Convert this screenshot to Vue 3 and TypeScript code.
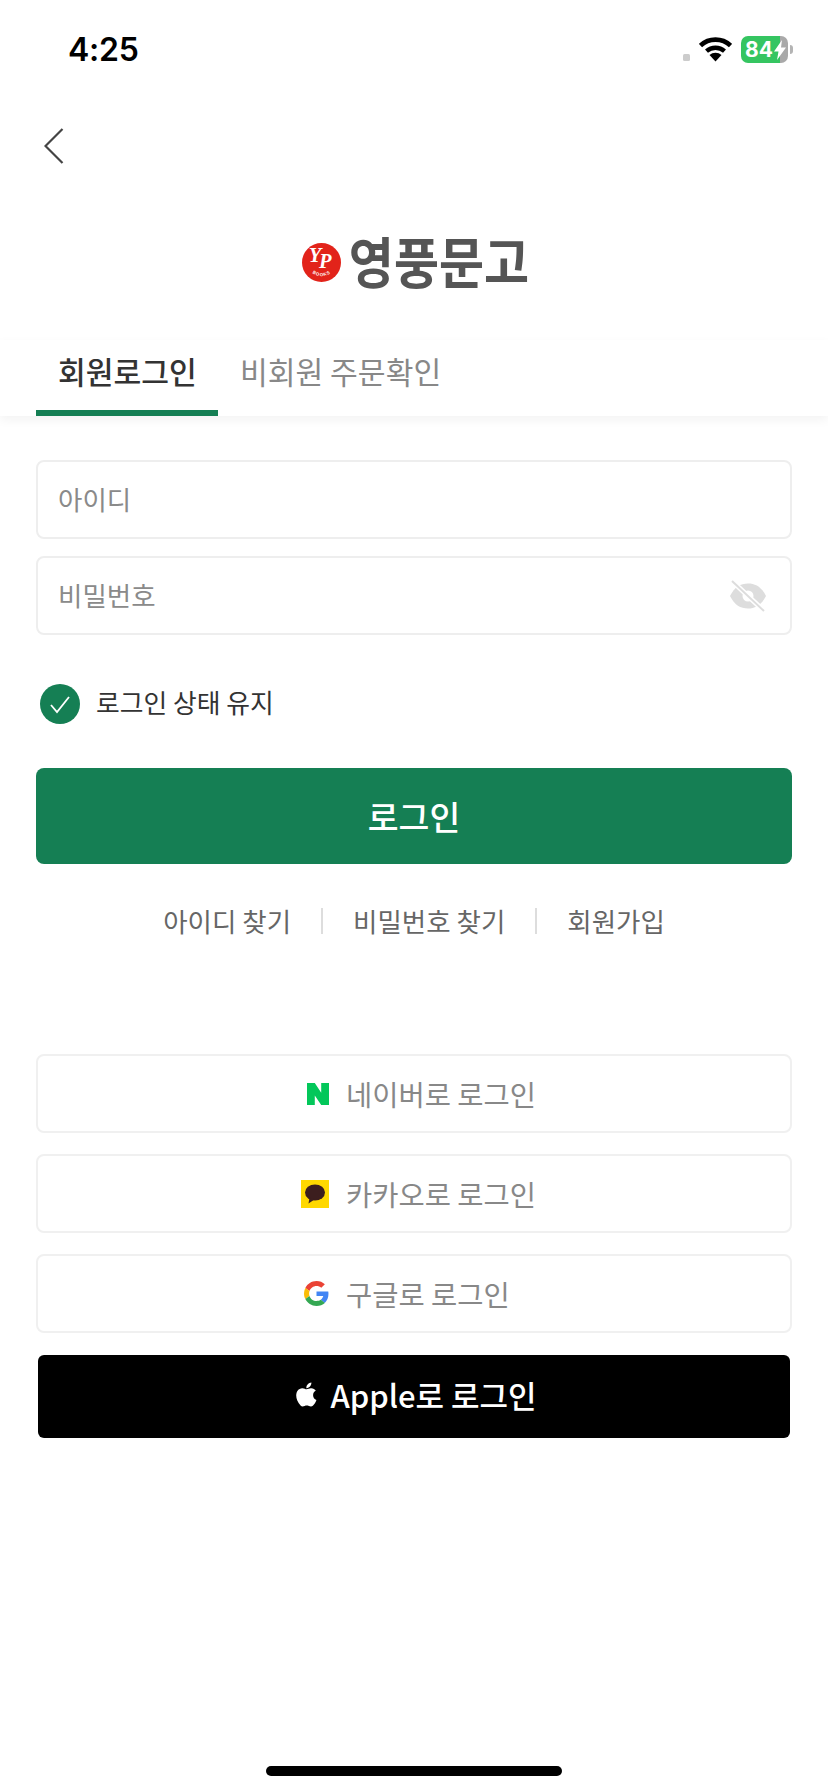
<script setup lang="ts">
const links: string[] = ['아이디 찾기', '비밀번호 찾기', '회원가입']
</script>

<template>
  <div class="app">
    <div class="status">
      <span class="time">4:25</span>
      <div class="status-right">
        <span class="dot"></span>
        <svg class="wifi" viewBox="0 0 33 25">
          <path d="M1.5 8.5a22 22 0 0 1 30 0" fill="none" stroke="#000" stroke-width="4.6" />
          <path d="M7.5 14.2a13.5 13.5 0 0 1 18 0" fill="none" stroke="#000" stroke-width="4.4" />
          <path d="M16.5 24.5l-6-6.4a8.6 8.6 0 0 1 12 0z" fill="#000" />
        </svg>
        <div class="battery">
          <div class="battery-body">
            <span class="battery-num">84</span>
            <svg class="bolt" viewBox="0 0 12 20"><path d="M8 0L0 11.500h4.500L3 20l9-12.500H7z" fill="#fff" /></svg>
          </div>
          <span class="battery-nub"></span>
        </div>
      </div>
    </div>

    <div class="nav">
      <svg class="back" viewBox="0 0 20 36">
        <path d="M18.500 1L1.500 18l17 17" fill="none" stroke="#444" stroke-width="2.200" />
      </svg>
    </div>

    <div class="logo">
      <svg class="logo-mark" viewBox="0 0 40 40">
        <defs><path id="booksArc" d="M7 26.500a15 15 0 0 0 26 0" /></defs>
        <circle cx="20" cy="20" r="20" fill="#e2231a" />
        <text x="7" y="19" class="yp">Y<tspan dy="7" dx="-2.500">P</tspan></text>
        <text class="books"><textPath href="#booksArc" startOffset="50%" text-anchor="middle">BOOKS</textPath></text>
      </svg>
      <span class="logo-text">영풍문고</span>
    </div>

    <div class="tabs">
      <div class="tab active">회원로그인</div>
      <div class="tab">비회원 주문확인</div>
    </div>

    <div class="form">
      <div class="field"><span class="placeholder">아이디</span></div>
      <div class="field second">
        <span class="placeholder">비밀번호</span>
        <svg class="eye" viewBox="0 0 38 32">
          <path d="M1 16C5.500 7 11.500 3.500 19 3.500S32.500 7 37 16c-4.500 9-10.500 12.500-18 12.500S5.500 25 1 16z" fill="#ddd" />
          <circle cx="19" cy="16" r="5.500" fill="#fff" />
          <path d="M3 1l32 30" stroke="#fff" stroke-width="5" />
          <path d="M3 1l32 30" stroke="#ddd" stroke-width="2" />
        </svg>
      </div>

      <div class="remember">
        <span class="check">
          <svg viewBox="0 0 40 40"><path d="M11 21l6 7 12-15" fill="none" stroke="#fff" stroke-width="1.800" /></svg>
        </span>
        <span class="remember-label">로그인 상태 유지</span>
      </div>

      <div class="login-btn">로그인</div>

      <div class="links">
        <template v-for="(link, i) in links" :key="link">
          <span v-if="i > 0" class="sep"></span>
          <span class="link">{{ link }}</span>
        </template>
      </div>

      <div class="social">
        <div class="sns">
          <svg class="ic-naver" viewBox="0 0 24 24"><path d="M0 0h8.500l7 10.500V0H24v24h-8.500l-7-10.500V24H0z" fill="#03c75a" /></svg>
          <span>네이버로 로그인</span>
        </div>
        <div class="sns">
          <svg class="ic-kakao" viewBox="0 0 28 28">
            <rect width="28" height="28" fill="#ffd800" />
            <ellipse cx="14" cy="12.500" rx="10" ry="8" fill="#3c1e1e" />
            <path d="M8.500 17.500l-1 6 6-4z" fill="#3c1e1e" />
          </svg>
          <span>카카오로 로그인</span>
        </div>
        <div class="sns">
          <svg class="ic-google" viewBox="0 0 48 48">
            <path fill="#EA4335" d="M24 9.500c3.540 0 6.710 1.220 9.210 3.600l6.850-6.850C35.900 2.380 30.470 0 24 0 14.620 0 6.510 5.380 2.560 13.220l7.980 6.190C12.430 13.720 17.740 9.500 24 9.500z" />
            <path fill="#4285F4" d="M46.980 24.550c0-1.570-.15-3.090-.38-4.550H24v9.020h12.940c-.58 2.960-2.260 5.480-4.780 7.180l7.730 6c4.510-4.180 7.090-10.360 7.090-17.650z" />
            <path fill="#FBBC05" d="M10.530 28.590c-.48-1.450-.76-2.990-.76-4.590s.27-3.140.76-4.590l-7.980-6.190C.92 16.460 0 20.120 0 24c0 3.880.92 7.540 2.560 10.780l7.970-6.190z" />
            <path fill="#34A853" d="M24 48c6.480 0 11.930-2.130 16.080-5.810l-7.730-6c-2.150 1.450-4.920 2.300-8.350 2.300-6.260 0-11.570-4.220-13.470-9.910l-7.980 6.190C6.510 42.620 14.620 48 24 48z" />
          </svg>
          <span>구글로 로그인</span>
        </div>
        <div class="apple">
          <svg class="ic-apple" viewBox="3.500 3 16.500 18">
            <path fill="#fff" d="M17.050 20.280c-.98.95-2.050.8-3.080.35-1.090-.46-2.090-.48-3.240 0-1.440.62-2.200.44-3.060-.35C2.790 15.250 3.510 7.590 9.050 7.310c1.350.07 2.290.74 3.080.8 1.180-.24 2.310-.93 3.570-.84 1.510.12 2.650.72 3.400 1.800-3.120 1.870-2.380 5.980.48 7.130-.57 1.500-1.310 2.990-2.540 4.090zM12.030 7.250c-.15-2.230 1.660-4.070 3.740-4.250.29 2.580-2.340 4.500-3.740 4.250z" />
          </svg>
          <span>Apple로 로그인</span>
        </div>
      </div>
    </div>

    <div class="home-indicator"></div>
  </div>
</template>

<style>
html, body { margin: 0; background: #fff; }
</style>

<style scoped>
.app {
  width: 828px;
  height: 1792px;
  display: flex;
  flex-direction: column;
  background: #fff;
  font-family: "Noto Sans CJK KR", "Noto Sans", sans-serif;
  overflow: hidden;
}
.status {
  height: 100px;
  flex: none;
  display: flex;
  align-items: flex-start;
  justify-content: space-between;
  padding: 0 35px 0 68px;
  box-sizing: border-box;
}
.time {
  margin-top: 30px;
  font-family: Inter, "Liberation Sans", sans-serif;
  font-weight: 600;
  font-size: 32px;
  line-height: 39px;
  letter-spacing: -0.2px;
  color: #000;
}
.status-right {
  margin-top: 36px;
  display: flex;
  align-items: flex-start;
}
.dot {
  width: 7px;
  height: 7px;
  margin-top: 18px;
  border-radius: 1.5px;
  background: #ccc;
}
.wifi {
  width: 33px;
  height: 25px;
  margin: 1px 0 0 9px;
}
.battery {
  display: flex;
  align-items: center;
  margin-left: 9px;
}
.battery-body {
  width: 47px;
  height: 27px;
  border-radius: 7px;
  box-sizing: border-box;
  padding-left: 4px;
  display: flex;
  align-items: center;
  background: linear-gradient(90deg, #35c561 83%, #a9a9a9 83%);
}
.battery-num {
  font-family: Inter, "Liberation Sans", sans-serif;
  font-weight: 700;
  font-size: 21px;
  line-height: 27px;
  color: #fff;
}
.bolt {
  width: 12px;
  height: 20px;
  margin-left: 1px;
  flex: none;
}
.battery-nub {
  width: 3px;
  height: 9px;
  margin-left: 2px;
  border-radius: 0 3px 3px 0;
  background: #b4b4b4;
}
.nav {
  height: 92px;
  flex: none;
  display: flex;
  align-items: center;
  padding-left: 44px;
}
.back {
  width: 20px;
  height: 36px;
}
.logo {
  margin-top: 40px;
  height: 60px;
  flex: none;
  display: flex;
  align-items: center;
  justify-content: center;
  gap: 8px;
  padding-left: 3px;
}
.logo-mark {
  width: 39px;
  height: 39px;
}
.yp {
  font-family: "Liberation Serif", serif;
  font-style: italic;
  font-weight: 700;
  font-size: 21px;
  fill: #fff;
}
.books {
  font-family: "Liberation Sans", sans-serif;
  font-weight: 700;
  font-size: 4.500px;
  letter-spacing: 0.8px;
  fill: #fff;
}
.logo-text {
  font-size: 49px;
  line-height: 60px;
  font-weight: 700;
  color: #555;
  transform: scaleY(1.12);
  transform-origin: 50% 85%;
}
.tabs {
  margin-top: 48px;
  height: 76px;
  flex: none;
  display: flex;
  padding-left: 36px;
  box-shadow: 0 4px 10px rgba(0, 0, 0, 0.05);
}
.tab {
  box-sizing: border-box;
  height: 76px;
  padding: 10px 22px 0;
  font-size: 30.200px;
  line-height: 42px;
  color: #888;
  white-space: nowrap;
}
.tab.active {
  width: 182px;
  color: #333;
  font-weight: 500;
  border-bottom: 6px solid #157f54;
}
.form {
  padding: 44px 36px 0;
  display: flex;
  flex-direction: column;
}
.field {
  height: 79px;
  box-sizing: border-box;
  border: 2px solid #eee;
  border-radius: 8px;
  padding: 0 20px;
  display: flex;
  align-items: center;
  justify-content: space-between;
}
.field.second {
  margin-top: 17px;
}
.placeholder {
  font-size: 26.500px;
  line-height: 38px;
  padding-bottom: 2px;
  color: #8a8a8a;
}
.eye {
  width: 38px;
  height: 32px;
  margin-right: 3px;
}
.remember {
  margin: 49px 0 0 4px;
  display: flex;
  align-items: center;
  gap: 16px;
}
.check {
  width: 40px;
  height: 40px;
  border-radius: 50%;
  background: #157f54;
  display: flex;
}
.check svg {
  width: 40px;
  height: 40px;
}
.remember-label {
  font-size: 25.800px;
  line-height: 36px;
  padding-bottom: 4px;
  color: #333;
}
.login-btn {
  margin-top: 44px;
  height: 96px;
  border-radius: 8px;
  background: #157f54;
  color: #fff;
  font-size: 33.500px;
  font-weight: 500;
  display: flex;
  align-items: center;
  justify-content: center;
  padding-bottom: 2px;
  box-sizing: border-box;
}
.links {
  margin-top: 41px;
  height: 32px;
  display: flex;
  align-items: center;
  justify-content: center;
}
.link {
  font-size: 26.500px;
  line-height: 32px;
  color: #666;
  white-space: nowrap;
}
.sep {
  width: 2px;
  height: 26px;
  background: #ddd;
  margin: 0 30px;
}
.social {
  margin-top: 117px;
  display: flex;
  flex-direction: column;
}
.sns {
  height: 79px;
  box-sizing: border-box;
  border: 2px solid #f0f0f0;
  border-radius: 8px;
  margin-bottom: 21px;
  display: grid;
  grid-template-columns: 291px 1fr;
  column-gap: 17px;
  align-items: center;
  justify-items: start;
  font-size: 28.500px;
  color: #888;
}
.sns svg {
  justify-self: end;
}
.ic-naver {
  width: 22px;
  height: 22px;
}
.ic-kakao {
  width: 28px;
  height: 28px;
}
.ic-google {
  width: 25px;
  height: 25px;
}
.apple {
  margin: 1px 2px 0;
  height: 83px;
  border-radius: 6px;
  background: #000;
  color: #fff;
  display: flex;
  align-items: center;
  justify-content: center;
  gap: 13px;
  font-size: 31px;
  font-weight: 500;
  padding: 0 0 5px 4px;
  box-sizing: border-box;
}
.ic-apple {
  width: 22px;
  height: 25px;
}
.home-indicator {
  margin: auto auto 16px;
  width: 296px;
  height: 10px;
  border-radius: 5px;
  background: #000;
}
</style>
